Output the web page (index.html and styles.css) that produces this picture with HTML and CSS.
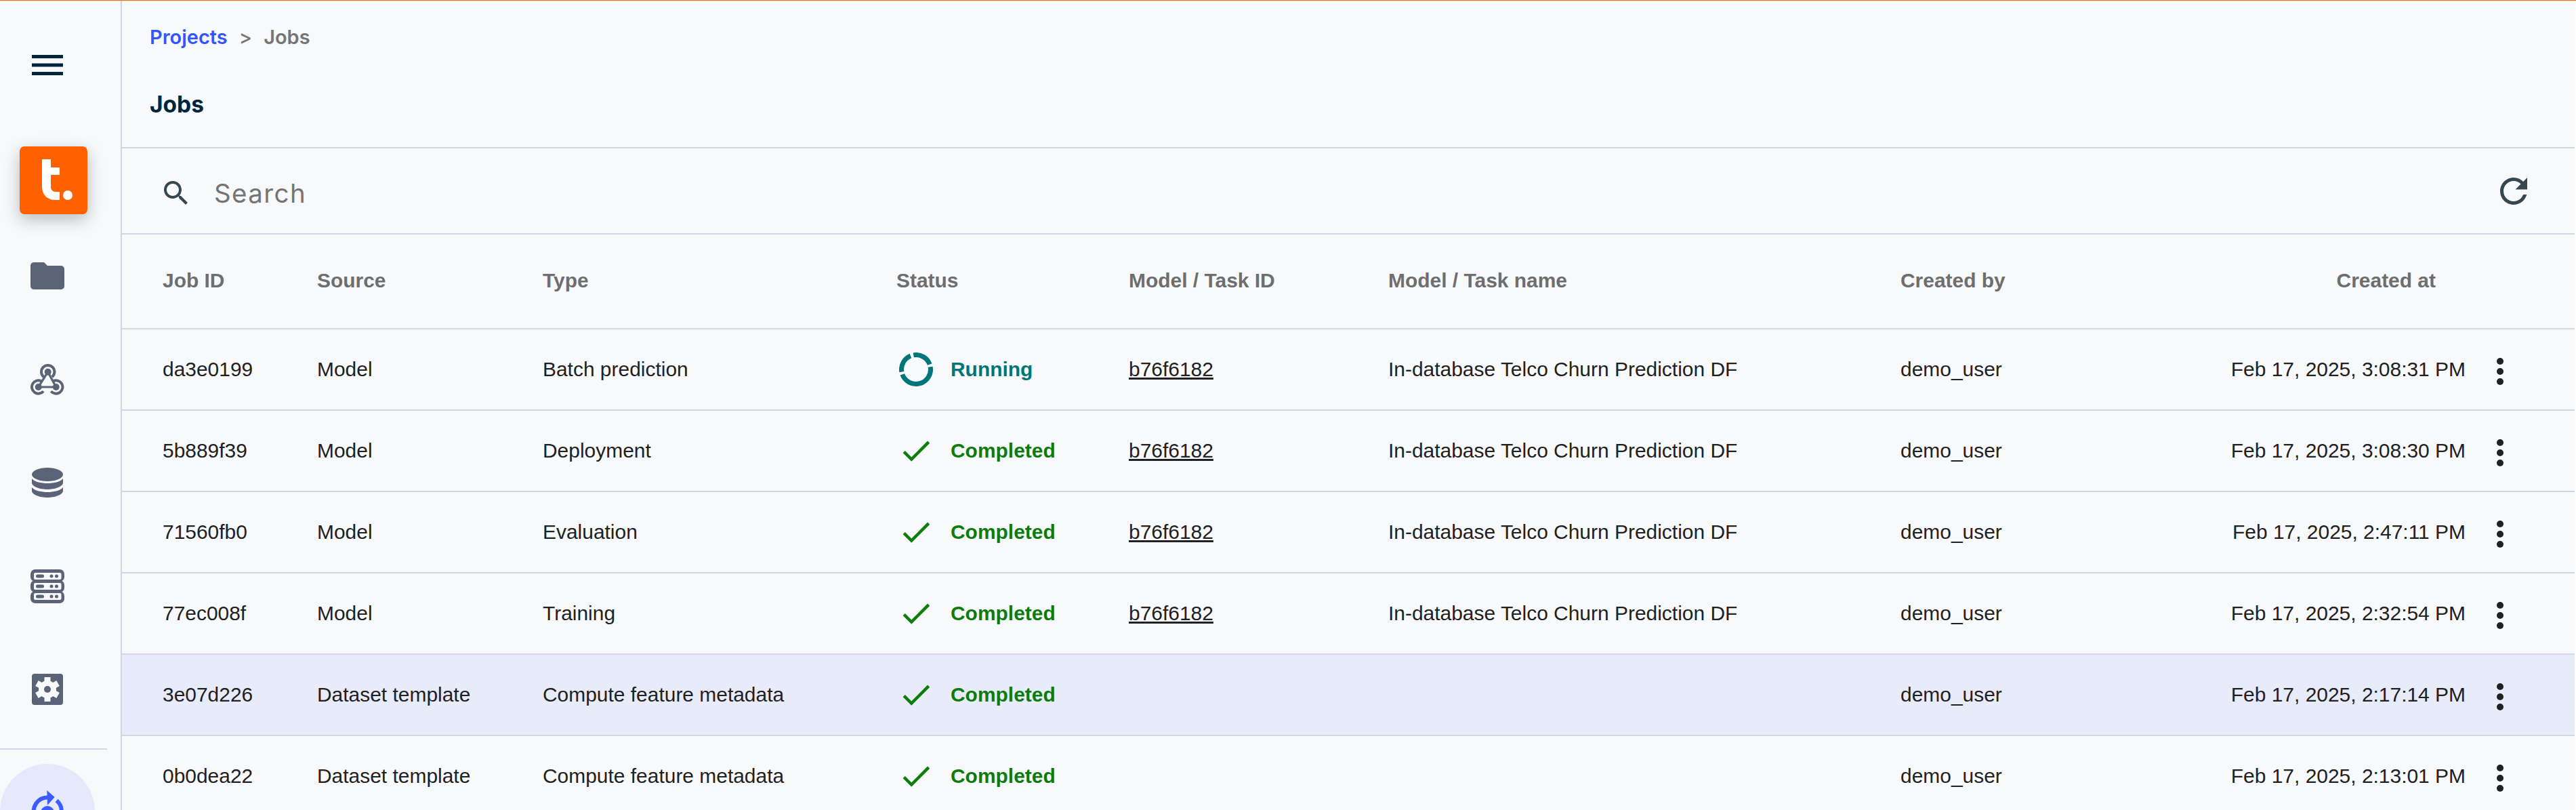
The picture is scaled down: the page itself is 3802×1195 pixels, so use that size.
FILE: index.html
```html
<!DOCTYPE html>
<html lang="en">
<head>
  <meta charset="UTF-8" />
  <meta name="viewport" content="width=device-width, initial-scale=1" />
  <title>Jobs</title>
  <link rel="stylesheet" href="styles.css">
</head>
<body>
<div class="app">

  <!-- Left navigation -->
  <aside class="sidebar">
    <button class="menu-btn" aria-label="Menu">
      <svg width="46" height="30" viewBox="0 0 46 30"><rect y="0" width="46" height="5"/><rect y="12.5" width="46" height="5"/><rect y="25" width="46" height="5"/></svg>
    </button>
    <div class="logo">
      <svg width="100" height="100" viewBox="0 0 100 100"><path d="M33 19H46V31H59V42H46V60C46 64 49 67 53 67H59V79H52C41 79 33 71 33 60Z"/><circle cx="71" cy="72" r="7"/></svg>
    </div>
    <nav class="nav">
      <a class="nav-item">
        <svg width="60" height="60" viewBox="0 0 24 24"><path d="M10 4H4c-1.1 0-2 .9-2 2v12c0 1.1.9 2 2 2h16c1.1 0 2-.9 2-2V8c0-1.1-.9-2-2-2h-8l-2-2z"/></svg>
      </a>
      <a class="nav-item">
        <svg width="50" height="46" viewBox="0 0 50 46">
          <g class="ring">
            <path d="M19.5 19.1A9.7 9.7 0 1 1 31.9 19.1"/>
            <path d="M16 25.3A9.7 9.7 0 1 0 19.1 40.2"/>
            <path d="M33.4 25.3A9.7 9.7 0 1 1 30.3 40.2"/>
            <path class="link" d="M25.7 11.7L11.7 34H37.7Z"/>
          </g>
          <circle cx="25.7" cy="11.7" r="5"/><circle cx="11.7" cy="34" r="5"/><circle cx="37.7" cy="34" r="5"/>
        </svg>
      </a>
      <a class="nav-item">
        <svg width="46" height="44" viewBox="0 0 46 44"><ellipse cx="23" cy="10" rx="23" ry="10"/><path d="M0 16C4 21 14 23 23 23S42 21 46 16V22C46 28 34 32 23 32S0 28 0 22Z"/><path d="M0 29C4 34 14 36 23 36S42 34 46 29V34C46 40 34 44 23 44S0 40 0 34Z"/></svg>
      </a>
      <a class="nav-item">
        <svg width="50" height="50" viewBox="0 0 50 50">
          <rect width="50" height="18" rx="7"/><rect y="16" width="50" height="18" rx="7"/><rect y="32" width="50" height="18" rx="7"/>
          <g class="hole"><rect x="5" y="5" width="40.5" height="10" rx="2"/><rect x="5" y="20" width="40.5" height="10" rx="2"/><rect x="5" y="35" width="40.5" height="10" rx="2"/></g>
          <rect x="8" y="7.5" width="12" height="5" rx="2.5"/><circle cx="31" cy="10" r="2.5"/><circle cx="38.5" cy="10" r="2.5"/>
          <rect x="8" y="22.5" width="12" height="5" rx="2.5"/><circle cx="31" cy="25" r="2.5"/><circle cx="38.5" cy="25" r="2.5"/>
          <rect x="8" y="37.5" width="12" height="5" rx="2.5"/><circle cx="31" cy="40" r="2.5"/><circle cx="38.5" cy="40" r="2.5"/>
        </svg>
      </a>
      <a class="nav-item">
        <svg width="46" height="46" viewBox="0 0 46 46">
          <rect width="46" height="46" rx="4"/>
          <g class="hole">
            <circle cx="23" cy="23" r="13"/>
            <rect x="18.5" y="5" width="9" height="8"/>
            <rect x="18.5" y="5" width="9" height="8" transform="rotate(60 23 23)"/>
            <rect x="18.5" y="5" width="9" height="8" transform="rotate(120 23 23)"/>
            <rect x="18.5" y="5" width="9" height="8" transform="rotate(180 23 23)"/>
            <rect x="18.5" y="5" width="9" height="8" transform="rotate(240 23 23)"/>
            <rect x="18.5" y="5" width="9" height="8" transform="rotate(300 23 23)"/>
          </g>
          <circle cx="23" cy="23" r="5"/>
        </svg>
      </a>
    </nav>
    <div class="nav-divider"></div>
    <a class="nav-active">
      <svg width="60" height="70" viewBox="0 -5 60 70">
        <path class="arc" d="M31 9.5A20.5 20.5 0 1 0 46 43"/>
        <path class="arc" d="M43.5 14A20.5 20.5 0 0 1 46 43"/>
        <polygon points="29.3,-1 40.7,9 30,21"/>
        <circle cx="30" cy="32" r="10"/>
      </svg>
    </a>
  </aside>

  <main class="main">
    <header class="page-head">
      <div class="breadcrumb">
        <a class="crumb-link">Projects</a>
        <span class="crumb-sep">&gt;</span>
        <span>Jobs</span>
      </div>
      <h1 class="page-title">Jobs</h1>
    </header>

    <div class="search-bar">
      <svg class="search-icon" width="48" height="48" viewBox="0 0 24 24"><path d="M15.5 14h-.79l-.28-.27C15.41 12.59 16 11.11 16 9.5 16 5.91 13.09 3 9.5 3S3 5.91 3 9.5 5.91 16 9.5 16c1.61 0 3.09-.59 4.23-1.57l.27.28v.79l5 4.99L20.49 19l-4.99-5zm-6 0C7.01 14 5 11.99 5 9.5S7.01 5 9.5 5 14 7.01 14 9.5 11.99 14 9.5 14z"/></svg>
      <span class="search-text">Search</span>
      <svg class="refresh-icon" width="60" height="60" viewBox="0 0 24 24"><path d="M17.65 6.35C16.2 4.9 14.21 4 12 4c-4.42 0-7.99 3.58-7.99 8s3.57 8 7.99 8c3.73 0 6.84-2.55 7.73-6h-2.08c-.82 2.33-3.04 4-5.65 4-3.31 0-6-2.69-6-6s2.69-6 6-6c1.66 0 3.14.69 4.22 1.78L13 11h7V4l-2.35 2.35z"/></svg>
    </div>

    <div class="jobs-table">
      <div class="row row-head">
        <div>Job ID</div>
        <div>Source</div>
        <div>Type</div>
        <div>Status</div>
        <div>Model / Task ID</div>
        <div>Model / Task name</div>
        <div>Created by</div>
        <div class="head-created">Created at</div>
        <div></div>
      </div>

      <div class="row">
        <div>da3e0199</div>
        <div>Model</div>
        <div>Batch prediction</div>
        <div class="status running">
          <span class="status-icon"><svg class="spin" width="50" height="50" viewBox="0 0 50 50"><path d="M21.27 3.83A21.5 21.5 0 0 1 45.2 17.65"/><path d="M46.17 21.27A21.5 21.5 0 0 1 4.8 32.35"/><path d="M3.83 28.73A21.5 21.5 0 0 1 16.95 5.07"/></svg></span>
          Running
        </div>
        <div><a class="task-link">b76f6182</a></div>
        <div>In-database Telco Churn Prediction DF</div>
        <div>demo_user</div>
        <div class="created">Feb 17, 2025, 3:08:31 PM</div>
        <div class="actions"><svg width="60" height="60" viewBox="0 0 24 24"><circle cx="12" cy="6" r="2"/><circle cx="12" cy="12" r="2"/><circle cx="12" cy="18" r="2"/></svg></div>
      </div>

      <div class="row">
        <div>5b889f39</div>
        <div>Model</div>
        <div>Deployment</div>
        <div class="status completed">
          <span class="status-icon"><svg class="check" width="54" height="54" viewBox="0 0 24 24"><path d="M9 16.17L4.83 12l-1.42 1.41L9 19 21 7l-1.41-1.41z"/></svg></span>
          Completed
        </div>
        <div><a class="task-link">b76f6182</a></div>
        <div>In-database Telco Churn Prediction DF</div>
        <div>demo_user</div>
        <div class="created">Feb 17, 2025, 3:08:30 PM</div>
        <div class="actions"><svg width="60" height="60" viewBox="0 0 24 24"><circle cx="12" cy="6" r="2"/><circle cx="12" cy="12" r="2"/><circle cx="12" cy="18" r="2"/></svg></div>
      </div>

      <div class="row">
        <div>71560fb0</div>
        <div>Model</div>
        <div>Evaluation</div>
        <div class="status completed">
          <span class="status-icon"><svg class="check" width="54" height="54" viewBox="0 0 24 24"><path d="M9 16.17L4.83 12l-1.42 1.41L9 19 21 7l-1.41-1.41z"/></svg></span>
          Completed
        </div>
        <div><a class="task-link">b76f6182</a></div>
        <div>In-database Telco Churn Prediction DF</div>
        <div>demo_user</div>
        <div class="created">Feb 17, 2025, 2:47:11 PM</div>
        <div class="actions"><svg width="60" height="60" viewBox="0 0 24 24"><circle cx="12" cy="6" r="2"/><circle cx="12" cy="12" r="2"/><circle cx="12" cy="18" r="2"/></svg></div>
      </div>

      <div class="row">
        <div>77ec008f</div>
        <div>Model</div>
        <div>Training</div>
        <div class="status completed">
          <span class="status-icon"><svg class="check" width="54" height="54" viewBox="0 0 24 24"><path d="M9 16.17L4.83 12l-1.42 1.41L9 19 21 7l-1.41-1.41z"/></svg></span>
          Completed
        </div>
        <div><a class="task-link">b76f6182</a></div>
        <div>In-database Telco Churn Prediction DF</div>
        <div>demo_user</div>
        <div class="created">Feb 17, 2025, 2:32:54 PM</div>
        <div class="actions"><svg width="60" height="60" viewBox="0 0 24 24"><circle cx="12" cy="6" r="2"/><circle cx="12" cy="12" r="2"/><circle cx="12" cy="18" r="2"/></svg></div>
      </div>

      <div class="row row-selected">
        <div>3e07d226</div>
        <div>Dataset template</div>
        <div>Compute feature metadata</div>
        <div class="status completed">
          <span class="status-icon"><svg class="check" width="54" height="54" viewBox="0 0 24 24"><path d="M9 16.17L4.83 12l-1.42 1.41L9 19 21 7l-1.41-1.41z"/></svg></span>
          Completed
        </div>
        <div></div>
        <div></div>
        <div>demo_user</div>
        <div class="created">Feb 17, 2025, 2:17:14 PM</div>
        <div class="actions"><svg width="60" height="60" viewBox="0 0 24 24"><circle cx="12" cy="6" r="2"/><circle cx="12" cy="12" r="2"/><circle cx="12" cy="18" r="2"/></svg></div>
      </div>

      <div class="row">
        <div>0b0dea22</div>
        <div>Dataset template</div>
        <div>Compute feature metadata</div>
        <div class="status completed">
          <span class="status-icon"><svg class="check" width="54" height="54" viewBox="0 0 24 24"><path d="M9 16.17L4.83 12l-1.42 1.41L9 19 21 7l-1.41-1.41z"/></svg></span>
          Completed
        </div>
        <div></div>
        <div></div>
        <div>demo_user</div>
        <div class="created">Feb 17, 2025, 2:13:01 PM</div>
        <div class="actions"><svg width="60" height="60" viewBox="0 0 24 24"><circle cx="12" cy="6" r="2"/><circle cx="12" cy="12" r="2"/><circle cx="12" cy="18" r="2"/></svg></div>
      </div>
    </div>
  </main>
</div>
</body>
</html>
```

FILE: styles.css
```css
* { box-sizing: border-box; }
html, body {
  height: 100%;
  margin: 0;
  overflow: hidden;
}
body {
  background-color: #f8f9fb;
  font-family: "Liberation Sans", Arial, sans-serif;
  color: #212121;
}
.app {
  display: flex;
  height: 1195px;
  overflow: hidden;
  border-top: 1px solid #ff6100;
}

/* Sidebar */
.sidebar {
  width: 180px;
  flex-shrink: 0;
  border-right: 2px solid #d0d5e8;
}
.menu-btn {
  display: flex;
  align-items: center;
  justify-content: center;
  width: 140px;
  height: 190px;
  padding: 0;
  border: none;
  background: none;
}
.menu-btn svg { fill: #00263e; }
.logo {
  width: 100px;
  height: 100px;
  margin: 25px 0 15px 29px;
  background-color: #ff6100;
  border-radius: 7px;
  box-shadow: 0 8px 24px rgba(0,0,0,0.25);
}
.logo svg { display: block; fill: white; }
.nav-item {
  display: flex;
  align-items: center;
  justify-content: center;
  width: 140px;
  height: 152.5px;
}
.nav-item svg { fill: #5a6378; }
.nav-item .hole { fill: #f8f9fb; }
.nav-item .ring {
  fill: none;
  stroke: #5a6378;
  stroke-width: 4;
}
.nav-item .link { stroke-width: 3.2; }
.nav-divider {
  width: 158px;
  height: 2px;
  margin-top: 10px;
  background-color: #d0d5e8;
}
.nav-active {
  display: flex;
  align-items: center;
  justify-content: center;
  width: 140px;
  height: 140px;
  margin-top: 21px;
  border-radius: 50%;
  background-color: #e6e9fb;
}
.nav-active svg { fill: #3d5cff; }
.nav-active .arc {
  fill: none;
  stroke: #3d5cff;
  stroke-width: 6;
}

/* Page header */
.main {
  flex: 1;
  min-width: 0;
  border-right: 2px solid #fdfdfe;
}
.page-head {
  height: 218px;
  padding: 36px 0 0 41px;
  border-bottom: 2px solid #d0d5e8;
}
.breadcrumb {
  display: flex;
  align-items: center;
  gap: 17px;
  height: 34px;
  font-family: Inter, sans-serif;
  font-size: 29px;
  font-weight: 600;
  color: #757575;
}
.crumb-link { color: #3355ff; }
.crumb-sep { font-weight: 500; }
.page-title {
  margin: 63px 0 0;
  font-family: Inter, sans-serif;
  font-size: 33.5px;
  line-height: 40px;
  font-weight: 700;
  color: #00263e;
}

/* Search */
.search-bar {
  display: flex;
  align-items: center;
  height: 127px;
  padding: 0 60px 0 56px;
  border-bottom: 2px solid #d0d5e8;
}
.search-icon {
  fill: #37474f;
  margin-top: 6px;
}
.search-text {
  margin-left: 32px;
  margin-top: 7px;
  flex: 1;
  font-family: Inter, sans-serif;
  font-size: 38.5px;
  letter-spacing: 1.4px;
  color: #757575;
}
.refresh-icon { fill: #37474f; }

/* Table */
.row {
  display: grid;
  grid-template-columns: 228px 333px 522px 343px 383px 756px 300px 534px 1fr;
  align-items: center;
  height: 120px;
  padding-left: 60px;
  font-size: 29.95px;
  border-bottom: 2px solid #d2d7ea;
}
.row-head {
  align-items: start;
  height: 140px;
  padding-top: 51px;
  font-weight: bold;
  color: #6e6e6e;
  border-bottom-color: #d9d9de;
}
.row-selected { background-color: #e8ebfa; }
.head-created {
  text-align: right;
  padding-right: 44px;
}
.created { text-align: right; }
.status {
  display: flex;
  align-items: center;
  font-weight: bold;
}
.running { color: #00757a; }
.completed { color: #0a7d0a; }
.status-icon {
  display: flex;
  align-items: center;
  width: 80px;
}
.spin {
  margin-left: 4px;
  fill: none;
  stroke: #00757a;
  stroke-width: 7;
}
.check {
  margin-left: 2px;
  fill: #0a7d0a;
}
.task-link {
  text-decoration: underline;
  text-decoration-thickness: 2.5px;
}
.actions {
  display: flex;
  margin: 6px 0 0 21px;
}
.actions svg { fill: #212121; }
```
